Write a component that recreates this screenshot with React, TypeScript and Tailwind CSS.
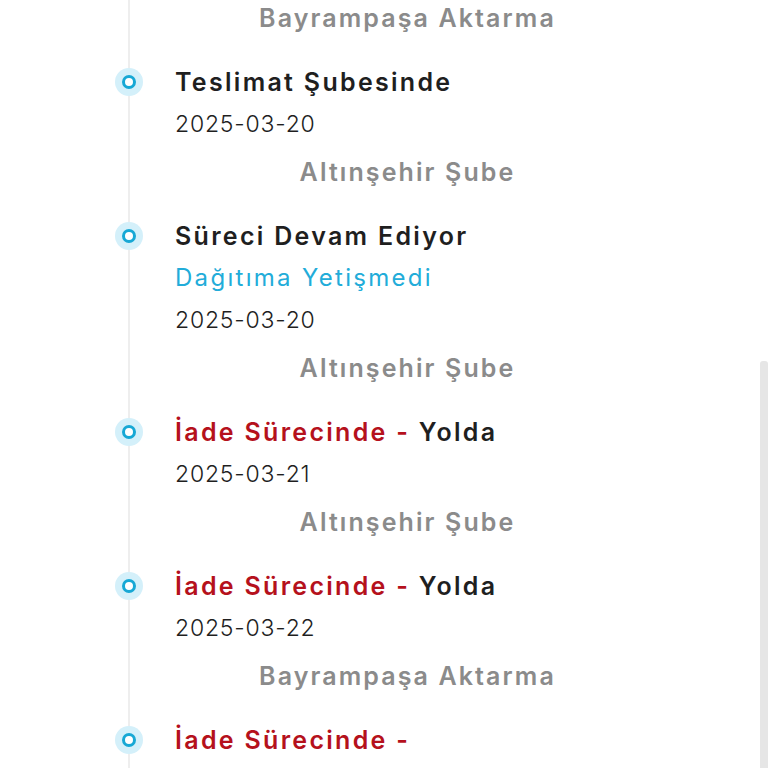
import type { ReactNode } from "react";

interface TrackingStep {
  title: ReactNode;
  note?: string;
  date: string;
  branch: string;
}

const STEPS: TrackingStep[] = [
  {
    title: "Teslimat Şubesinde",
    date: "2025-03-20",
    branch: "Altınşehir Şube",
  },
  {
    title: "Süreci Devam Ediyor",
    note: "Dağıtıma Yetişmedi",
    date: "2025-03-20",
    branch: "Altınşehir Şube",
  },
  {
    title: (
      <>
        <span className="text-[#b5111c]">İade Sürecinde - </span>Yolda
      </>
    ),
    date: "2025-03-21",
    branch: "Altınşehir Şube",
  },
  {
    title: (
      <>
        <span className="text-[#b5111c]">İade Sürecinde - </span>Yolda
      </>
    ),
    date: "2025-03-22",
    branch: "Bayrampaşa Aktarma",
  },
  {
    title: <span className="text-[#b5111c]">İade Sürecinde -</span>,
    date: "",
    branch: "",
  },
];

function Dot() {
  return (
    <div className="flex h-[42px] w-[30px] shrink-0 items-center justify-center">
      <div className="flex h-[28px] w-[28px] items-center justify-center rounded-full bg-[#d4f0fa]">
        <div className="h-[14px] w-[14px] rounded-full border-[3.5px] border-[#17a8d5] bg-white" />
      </div>
    </div>
  );
}

function BranchLabel({ name }: { name: string }) {
  return (
    <div className="text-center text-[25px] font-semibold leading-[42px] tracking-[2.1px] text-[#8b8b8b]">
      {name}
    </div>
  );
}

export default function App() {
  return (
    <div
      className="relative h-[768px] overflow-hidden bg-white"
      style={{ fontFamily: "Inter, 'Open Sans', sans-serif" }}
    >
      {/* timeline rail */}
      <div className="absolute bottom-0 left-[128px] top-0 w-[2px] bg-[#eeeeee]" />
      {/* scroll thumb */}
      <div className="absolute bottom-0 right-0 top-[361px] w-[8px] rounded-t-[3px] bg-[#e6e6e6]" />

      <div className="relative -mt-[3px] flex w-[640px] flex-col gap-[22px] pl-[114px]">
        <div className="pl-[61px]">
          <BranchLabel name="Bayrampaşa Aktarma" />
        </div>
        {STEPS.map((step, i) => (
          <div key={i} className="flex gap-[31px]">
            <Dot />
            <div className="min-w-0 flex-1">
              <div className="text-[25px] font-semibold leading-[42px] tracking-[2.3px] text-[#1f1f1f]">
                {step.title}
              </div>
              {step.note ? (
                <div className="text-[24px] leading-[42px] tracking-[2.3px] text-[#22acd9]">{step.note}</div>
              ) : null}
              {step.date ? (
                <div className="text-[23px] font-light leading-[42px] tracking-[0.8px] text-[#1f1f1f]">
                  {step.date}
                </div>
              ) : null}
              {step.branch ? (
                <div className="mt-[6px]">
                  <BranchLabel name={step.branch} />
                </div>
              ) : null}
            </div>
          </div>
        ))}
      </div>
    </div>
  );
}
